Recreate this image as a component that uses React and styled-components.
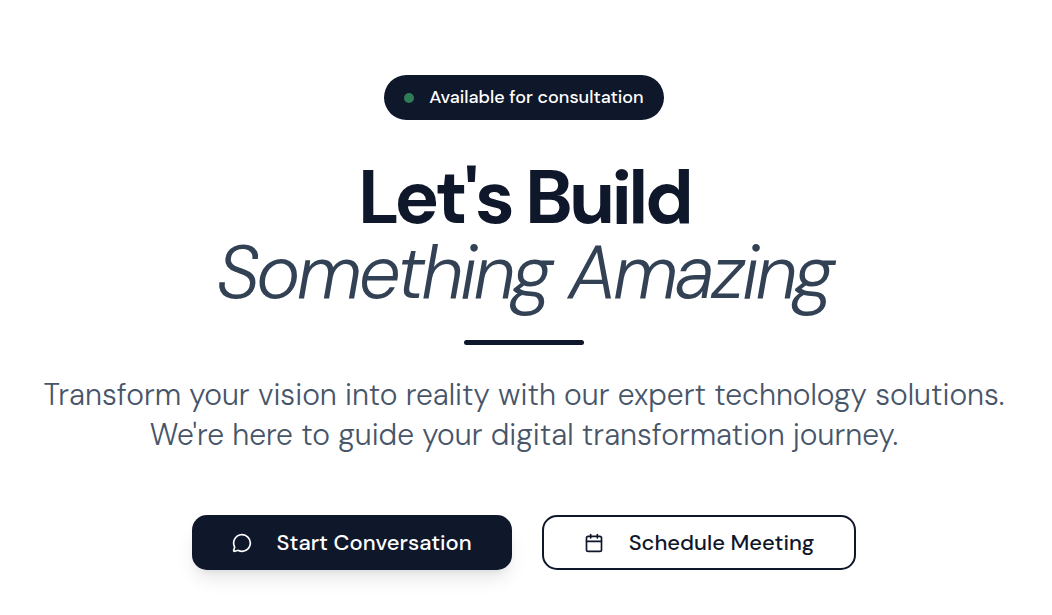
import React from "react";
import styled, { createGlobalStyle } from "styled-components";
import { MessageCircle, Calendar } from "lucide-react";

const GlobalStyle = createGlobalStyle`
  *, *::before, *::after { box-sizing: border-box; }
  body {
    margin: 0;
    background: #ffffff;
    color: #0f172a;
    font-family: "DM Sans", Lato, "Open Sans", sans-serif;
  }
`;

const Hero = styled.main`
  display: flex;
  flex-direction: column;
  align-items: center;
  padding: 75px 28px 45px 24px;
  text-align: center;
`;

const Badge = styled.div`
  display: flex;
  align-items: center;
  gap: 15px;
  padding: 10px 20px;
  border-radius: 24px;
  background: #0f172a;
  color: #ffffff;
  font-size: 18px;
  line-height: 25px;
  font-weight: 500;
`;

const Dot = styled.span`
  width: 10px;
  height: 10px;
  border-radius: 50%;
  background: #2e7d57;
`;

const Title = styled.h1`
  margin: 40px 0 0;
  font-size: 75px;
  line-height: 75px;
  font-weight: 700;
  letter-spacing: -0.05em;
`;

const TitleAccent = styled.span`
  display: block;
  color: #334155;
  font-weight: 300;
  font-style: italic;
`;

const Divider = styled.div`
  width: 120px;
  height: 5px;
  margin: 30px 0;
  border-radius: 3px;
  background: #0f172a;
`;

const Lead = styled.p`
  margin: 0;
  color: #475569;
  font-size: 30px;
  line-height: 40px;
  font-weight: 300;
`;

const Actions = styled.div`
  display: flex;
  flex-wrap: wrap;
  justify-content: center;
  gap: 30px;
  margin-top: 60px;
`;

const Button = styled.button`
  display: flex;
  align-items: center;
  gap: 25px;
  height: 55px;
  padding: 0 40px;
  border: ${({ $primary }) => ($primary ? "none" : "2px solid #0f172a")};
  border-radius: 15px;
  background: ${({ $primary }) => ($primary ? "#0f172a" : "#ffffff")};
  color: ${({ $primary }) => ($primary ? "#ffffff" : "#0f172a")};
  box-shadow: ${({ $primary }) =>
    $primary
      ? "0 12px 19px -4px rgba(0, 0, 0, 0.1), 0 5px 8px -5px rgba(0, 0, 0, 0.1)"
      : "none"};
  font-family: inherit;
  font-size: 22px;
  line-height: 35px;
  font-weight: 500;
  cursor: pointer;
`;

export default function App() {
  return (
    <>
      <GlobalStyle />
      <Hero>
        <Badge><Dot />Available for consultation</Badge>
        <Title>Let's Build<TitleAccent>Something Amazing</TitleAccent></Title>
        <Divider />
        <Lead>
          Transform your vision into reality with our expert technology solutions.<br />
          We're here to guide your digital transformation journey.
        </Lead>
        <Actions>
          <Button type="button" $primary>
            <MessageCircle size={20} aria-hidden="true" />Start Conversation
          </Button>
          <Button type="button">
            <Calendar size={20} aria-hidden="true" />Schedule Meeting
          </Button>
        </Actions>
      </Hero>
    </>
  );
}
